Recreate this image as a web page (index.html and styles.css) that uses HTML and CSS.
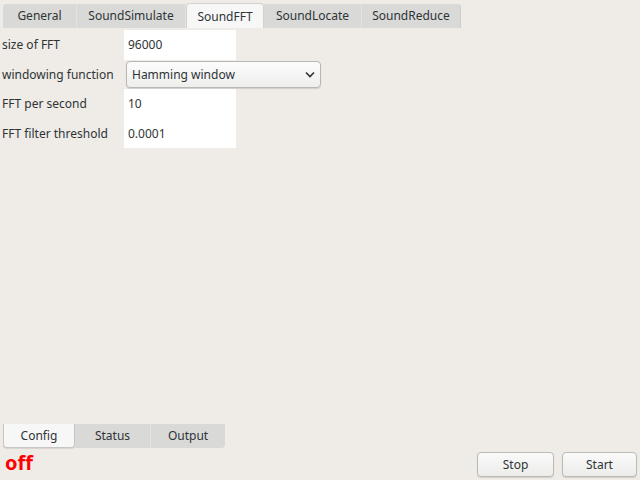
FILE: index.html
```html
<!DOCTYPE html>
<html>
<head>
<meta charset="utf-8">
<link rel="stylesheet" href="styles.css">
</head>
<body>
<div class="app">
  <div class="tabbar top">
    <div class="tab t1">General</div>
    <div class="tab t2">SoundSimulate</div>
    <div class="tab t3 active">SoundFFT</div>
    <div class="tab t4">SoundLocate</div>
    <div class="tab t5 last">SoundReduce</div>
  </div>
  <div class="form">
    <div class="label">size of FFT</div>
    <div class="field"><div class="input">96000</div></div>
    <div class="label">windowing function</div>
    <div class="field"><div class="select"><span>Hamming window</span>
      <svg class="chev" width="10" height="7" viewBox="0 0 10 7"><path d="M1 1.5 L5 5.5 L9 1.5" fill="none" stroke="#2e3436" stroke-width="1.6"/></svg></div></div>
    <div class="label">FFT per second</div>
    <div class="field"><div class="input">10</div></div>
    <div class="label">FFT filter threshold</div>
    <div class="field"><div class="input">0.0001</div></div>
  </div>
  <div class="spacer"></div>
  <div class="tabbar bottom">
    <div class="btab active">Config</div>
    <div class="btab">Status</div>
    <div class="btab last">Output</div>
  </div>
  <div class="statusrow">
    <div class="off">off</div>
    <div class="buttons">
      <div class="btn stop">Stop</div>
      <div class="btn start">Start</div>
    </div>
  </div>
</div>
</body>
</html>
```
FILE: styles.css
```css
html, body {
  margin: 0;
  padding: 0;
  width: 640px;
  height: 480px;
  background: #efebe7;
  overflow: hidden;
}
.app {
  display: flex;
  flex-direction: column;
  height: 480px;
  font-family: "Noto Sans", "Open Sans", sans-serif;
  font-size: 12px;
  color: #2e3436;
}
.tabbar.top {
  display: flex;
  align-items: flex-end;
  padding: 3px 0 0 3px;
  height: 25px;
}
.tab {
  height: 24px;
  line-height: 23px;
  background: #d9d9d8;
  border-right: 1px solid #e6e4e1;
  color: #2e3436;
  box-sizing: border-box;
  text-align: center;
}
.t1 { width: 74px; border-top-left-radius: 3px; }
.t2 { width: 109px; }
.t3 { width: 78px; }
.t4 { width: 98px; }
.t5 { width: 99px; }
.tab.active {
  height: 25px;
  line-height: 25px;
  background: #f7f7f7;
  border-radius: 4px 4px 0 0;
  border: 1px solid #d4d2cf;
  border-bottom: none;
}
.tab.last { border-top-right-radius: 4px; border-right: 1px solid #cfcdca; }
.form {
  display: grid;
  grid-template-columns: 122px 200px;
  grid-auto-rows: 29.5px;
  margin-top: 2px;
  padding-left: 2px;
}
.label {
  display: flex;
  align-items: center;
}
.field {
  display: flex;
  align-items: stretch;
}
.input {
  width: 112px;
  background: #ffffff;
  padding-left: 4px;
  display: flex;
  align-items: center;
  box-sizing: border-box;
}
.select {
  margin: 1px 0 1px 2px;
  width: 195px;
  height: 27px;
  box-sizing: border-box;
  border: 1px solid #b9b7b3;
  border-radius: 4px;
  background: linear-gradient(#fcfcfc, #eeeeed);
  box-shadow: 0 1px 1px rgba(0,0,0,0.12);
  display: flex;
  align-items: center;
  justify-content: space-between;
  padding: 0 4px 0 5px;
}
.chev { margin-right: 1px; }
.spacer { flex: 1; }
.tabbar.bottom {
  display: flex;
  padding-left: 3px;
  height: 24px;
}
.btab {
  height: 24px;
  line-height: 24px;
  background: #d9d9d8;
  border-right: 1px solid #e6e4e1;
  box-sizing: border-box;
  text-align: center;
}
.btab:nth-child(1) { width: 72px; }
.btab:nth-child(2) { width: 76px; }
.btab:nth-child(3) { width: 74px; }
.btab.active {
  background: #f7f7f7;
  border: 1px solid #c8c6c3;
  border-top: none;
  border-radius: 0 0 4px 4px;
  box-shadow: 0 1px 1px rgba(0,0,0,0.1);
}
.btab.last { border-bottom-right-radius: 4px; border-right: none; }
.statusrow {
  display: flex;
  justify-content: space-between;
  align-items: flex-start;
  height: 32px;
}
.off {
  color: #ff0000;
  font-weight: bold;
  font-size: 20px;
  line-height: 30px;
  padding-left: 5px;
}
.buttons {
  display: flex;
  gap: 8px;
  padding: 4px 3px 0 0;
}
.btn {
  width: 77px;
  height: 25px;
  line-height: 24px;
  text-align: center;
  box-sizing: border-box;
  border: 1px solid #bcbab6;
  border-radius: 4px;
  background: linear-gradient(#fafafa, #ececeb);
  box-shadow: 0 1px 1px rgba(0,0,0,0.12);
}
.btn.start { width: 75px; }
```
